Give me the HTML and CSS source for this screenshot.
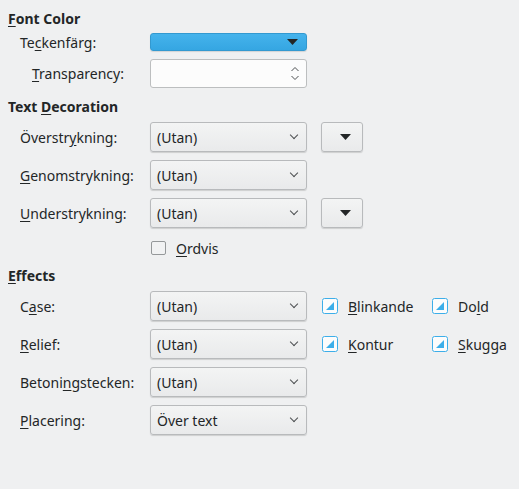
FILE: index.html
```html
<!DOCTYPE html>
<html lang="sv">
<head>
  <meta charset="UTF-8" />
  <title>Teckeneffekter</title>
  <link rel="stylesheet" href="styles.css">
</head>
<body>
  <h2 class="heading heading-first"><u>F</u>ont Color</h2>
  <div class="section font-color">
    <div class="row row-small">
      <span class="label">Te<u>c</u>kenfärg:</span>
      <button class="color-btn"><svg class="tri" width="11" height="6" viewBox="0 0 11 6"><polygon points="0,0 11,0 5.5,6" fill="#232627"/></svg></button>
    </div>
    <div class="row row-spin">
      <span class="label label-indent"><u>T</u>ransparency:</span>
      <div class="spin">
        <svg class="spin-arrows" width="10" height="15" viewBox="0 0 10 15"><polyline points="1.5,5 5,1.5 8.5,5" fill="none" stroke="#4d5052" stroke-width="1"/><polyline points="1.5,10 5,13.5 8.5,10" fill="none" stroke="#4d5052" stroke-width="1"/></svg>
      </div>
    </div>
  </div>

  <h2 class="heading heading-deco">Text <u>D</u>ecoration</h2>
  <div class="section">
    <div class="row">
      <span class="label">Överstr<u>y</u>kning:</span>
      <div class="combo">(Utan)<span class="chev"></span></div>
      <button class="small-btn"><svg width="11" height="6" viewBox="0 0 11 6"><polygon points="0,0 11,0 5.5,6" fill="#232627"/></svg></button>
    </div>
    <div class="row">
      <span class="label"><u>G</u>enomstrykning:</span>
      <div class="combo">(Utan)<span class="chev"></span></div>
    </div>
    <div class="row">
      <span class="label"><u>U</u>nderstrykning:</span>
      <div class="combo">(Utan)<span class="chev"></span></div>
      <button class="small-btn"><svg width="11" height="6" viewBox="0 0 11 6"><polygon points="0,0 11,0 5.5,6" fill="#232627"/></svg></button>
    </div>
    <div class="row row-check">
      <span class="label"></span>
      <label class="check"><span class="box box-off"></span><span><u>O</u>rdvis</span></label>
    </div>
  </div>

  <h2 class="heading heading-effects"><u>E</u>ffects</h2>
  <div class="section">
    <div class="row">
      <span class="label">C<u>a</u>se:</span>
      <div class="combo">(Utan)<span class="chev"></span></div>
      <div class="checks">
        <label class="check"><svg class="box" width="16" height="16" viewBox="0 0 16 16"><rect x="0.5" y="0.5" width="15" height="15" rx="2" fill="#fcfcfc" stroke="#3daee9"/><polygon points="4,12 12,12 12,4" fill="#3daee9"/></svg><span><u>B</u>linkande</span></label>
        <label class="check"><svg class="box" width="16" height="16" viewBox="0 0 16 16"><rect x="0.5" y="0.5" width="15" height="15" rx="2" fill="#fcfcfc" stroke="#3daee9"/><polygon points="4,12 12,12 12,4" fill="#3daee9"/></svg><span>Do<u>l</u>d</span></label>
      </div>
    </div>
    <div class="row">
      <span class="label"><u>R</u>elief:</span>
      <div class="combo">(Utan)<span class="chev"></span></div>
      <div class="checks">
        <label class="check"><svg class="box" width="16" height="16" viewBox="0 0 16 16"><rect x="0.5" y="0.5" width="15" height="15" rx="2" fill="#fcfcfc" stroke="#3daee9"/><polygon points="4,12 12,12 12,4" fill="#3daee9"/></svg><span><u>K</u>ontur</span></label>
        <label class="check"><svg class="box" width="16" height="16" viewBox="0 0 16 16"><rect x="0.5" y="0.5" width="15" height="15" rx="2" fill="#fcfcfc" stroke="#3daee9"/><polygon points="4,12 12,12 12,4" fill="#3daee9"/></svg><span><u>S</u>kugga</span></label>
      </div>
    </div>
    <div class="row">
      <span class="label">Betoni<u>n</u>gstecken:</span>
      <div class="combo">(Utan)<span class="chev"></span></div>
    </div>
    <div class="row">
      <span class="label"><u>P</u>lacering:</span>
      <div class="combo">Över text<span class="chev"></span></div>
    </div>
  </div>
</body>
</html>
```

FILE: styles.css
```css
body {
  margin: 0;
  padding: 0;
  background-color: #eff0f1;
  color: #232627;
  font-family: 'Noto Sans', 'DejaVu Sans', sans-serif;
  font-size: 14px;
  height: 489px;
  overflow: hidden;
}
u {
  text-decoration: underline;
  text-underline-offset: 2px;
}
.heading {
  margin: 0;
  padding-left: 8px;
  font-size: 14px;
  font-weight: bold;
  line-height: 17px;
  height: 17px;
}
.heading-first {
  padding-top: 10px;
}
.heading-deco {
  margin-top: 10px;
}
.heading-effects {
  margin-top: 7px;
}
.section {
  display: flex;
  flex-direction: column;
  gap: 8px;
  padding-left: 20px;
  margin-top: 7px;
}
.font-color {
  margin-top: 6px;
}
.row {
  display: flex;
  align-items: center;
  height: 30px;
}
.row-small {
  height: 18px;
}
.row-spin {
  height: 29px;
}
.row-check {
  height: 24px;
}
.label {
  width: 130px;
  flex: none;
  white-space: nowrap;
}
.label-indent {
  padding-left: 12px;
  box-sizing: border-box;
}
.color-btn {
  flex: none;
  width: 157px;
  height: 18px;
  margin: 0;
  padding: 0 8px 0 0;
  border: 1px solid #3399d0;
  border-radius: 3px;
  background: linear-gradient(#45b3ec, #35a6e2);
  box-shadow: 0 1px 1px rgba(0, 0, 0, 0.12);
  display: flex;
  align-items: center;
  justify-content: flex-end;
}
.spin {
  flex: none;
  width: 157px;
  height: 29px;
  box-sizing: border-box;
  border: 1px solid #bcbebf;
  border-radius: 3px;
  background-color: #fcfcfc;
  display: flex;
  align-items: center;
  justify-content: flex-end;
  padding-right: 6px;
}
.combo {
  flex: none;
  width: 157px;
  height: 30px;
  box-sizing: border-box;
  border: 1px solid #b8babc;
  border-radius: 3px;
  background: linear-gradient(#f3f4f4, #e9eaeb);
  box-shadow: 0 1px 1px rgba(0, 0, 0, 0.14);
  display: flex;
  align-items: center;
  justify-content: space-between;
  padding: 0 9px 0 6px;
}
.chev {
  width: 5px;
  height: 5px;
  border-right: 1px solid #4d5052;
  border-bottom: 1px solid #4d5052;
  transform: rotate(45deg);
  margin-top: -4px;
}
.small-btn {
  flex: none;
  width: 42px;
  height: 30px;
  margin: 0 0 0 14px;
  padding: 0 11px 0 0;
  border: 1px solid #b8babc;
  border-radius: 3px;
  background: linear-gradient(#f3f4f4, #e9eaeb);
  box-shadow: 0 1px 1px rgba(0, 0, 0, 0.14);
  display: flex;
  align-items: center;
  justify-content: flex-end;
}
.checks {
  display: flex;
  flex: none;
  margin-left: 15px;
}
.checks .check {
  width: 110px;
}
.check {
  display: flex;
  align-items: center;
  gap: 10px;
  white-space: nowrap;
}
.box {
  flex: none;
  width: 16px;
  height: 16px;
}
.box-off {
  box-sizing: border-box;
  width: 15px;
  height: 14px;
  margin-left: 1px;
  border: 1px solid #95989a;
  border-radius: 2px;
  background-color: #f1f2f3;
}
```
